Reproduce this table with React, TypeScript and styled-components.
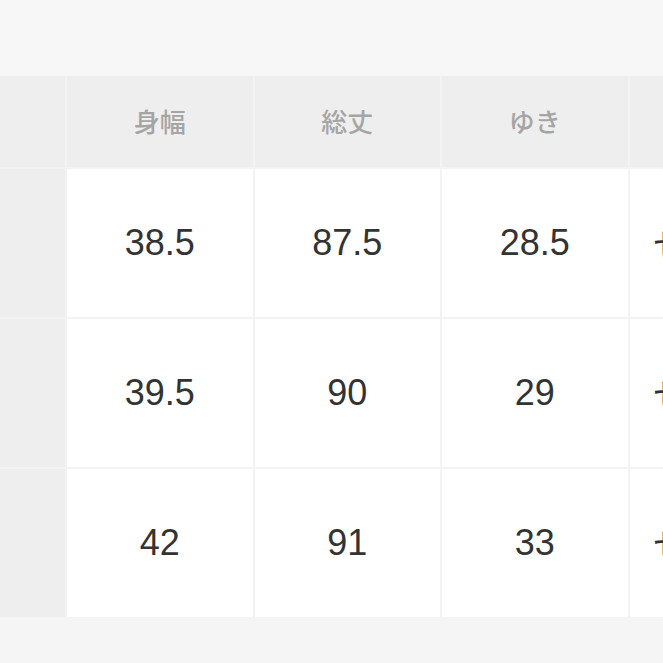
import React from "react";
import styled, { createGlobalStyle } from "styled-components";

const Global = createGlobalStyle`
  html, body { margin: 0; padding: 0; background: #f7f7f7; }
  body { width: 663px; height: 663px; overflow: hidden; }
`;

const Page = styled.div`
  width: 663px;
  height: 663px;
  overflow: hidden;
  display: flex;
  flex-direction: column;
  background: #f7f7f7;
`;

const TopSpace = styled.div`
  height: 76px;
  flex: none;
  background: #f7f7f7;
`;

const Table = styled.div`
  display: grid;
  grid-template-columns: 65px repeat(4, 185.5px);
  grid-template-rows: 91px repeat(3, 148px);
  column-gap: 2px;
  row-gap: 2px;
  background: #f3f3f3;
  width: max-content;
  flex: none;
`;

const HeadCell = styled.div`
  background: #eeeeee;
  display: flex;
  align-items: center;
  justify-content: center;
  padding-bottom: 3px;
  font-family: "Noto Sans CJK JP", "Noto Sans", sans-serif;
  font-size: 26px;
  font-weight: 500;
  color: #a5a5a5;
  white-space: nowrap;
`;

const SideCell = styled.div`
  background: #eeeeee;
`;

const Cell = styled.div<{ $shift?: number }>`
  background: #ffffff;
  display: flex;
  align-items: center;
  justify-content: center;
  padding-left: ${(p) => p.$shift ?? 0}px;
  font-family: "Liberation Sans", "Noto Sans CJK JP", sans-serif;
  font-size: 36px;
  color: #333333;
  white-space: nowrap;
  overflow: hidden;
`;

const BottomSpace = styled.div`
  flex: 1;
  background: #f5f5f5;
`;

const headers = ["身幅", "総丈", "ゆき", ""];
const rows = [
  ["38.5", "87.5", "28.5", "せんせい"],
  ["39.5", "90", "29", "せんせい"],
  ["42", "91", "33", "せんせい"],
];

export default function App() {
  return (
    <Page>
      <Global />
      <TopSpace />
      <Table>
        <HeadCell />
        {headers.map((h, i) => (
          <HeadCell key={i}>{h}</HeadCell>
        ))}
        {rows.map((r, ri) => (
          <React.Fragment key={ri}>
            <SideCell />
            {r.map((v, ci) => (
              <Cell key={ci} $shift={ci === 3 ? 6 : 0}>
                {v}
              </Cell>
            ))}
          </React.Fragment>
        ))}
      </Table>
      <BottomSpace />
    </Page>
  );
}
